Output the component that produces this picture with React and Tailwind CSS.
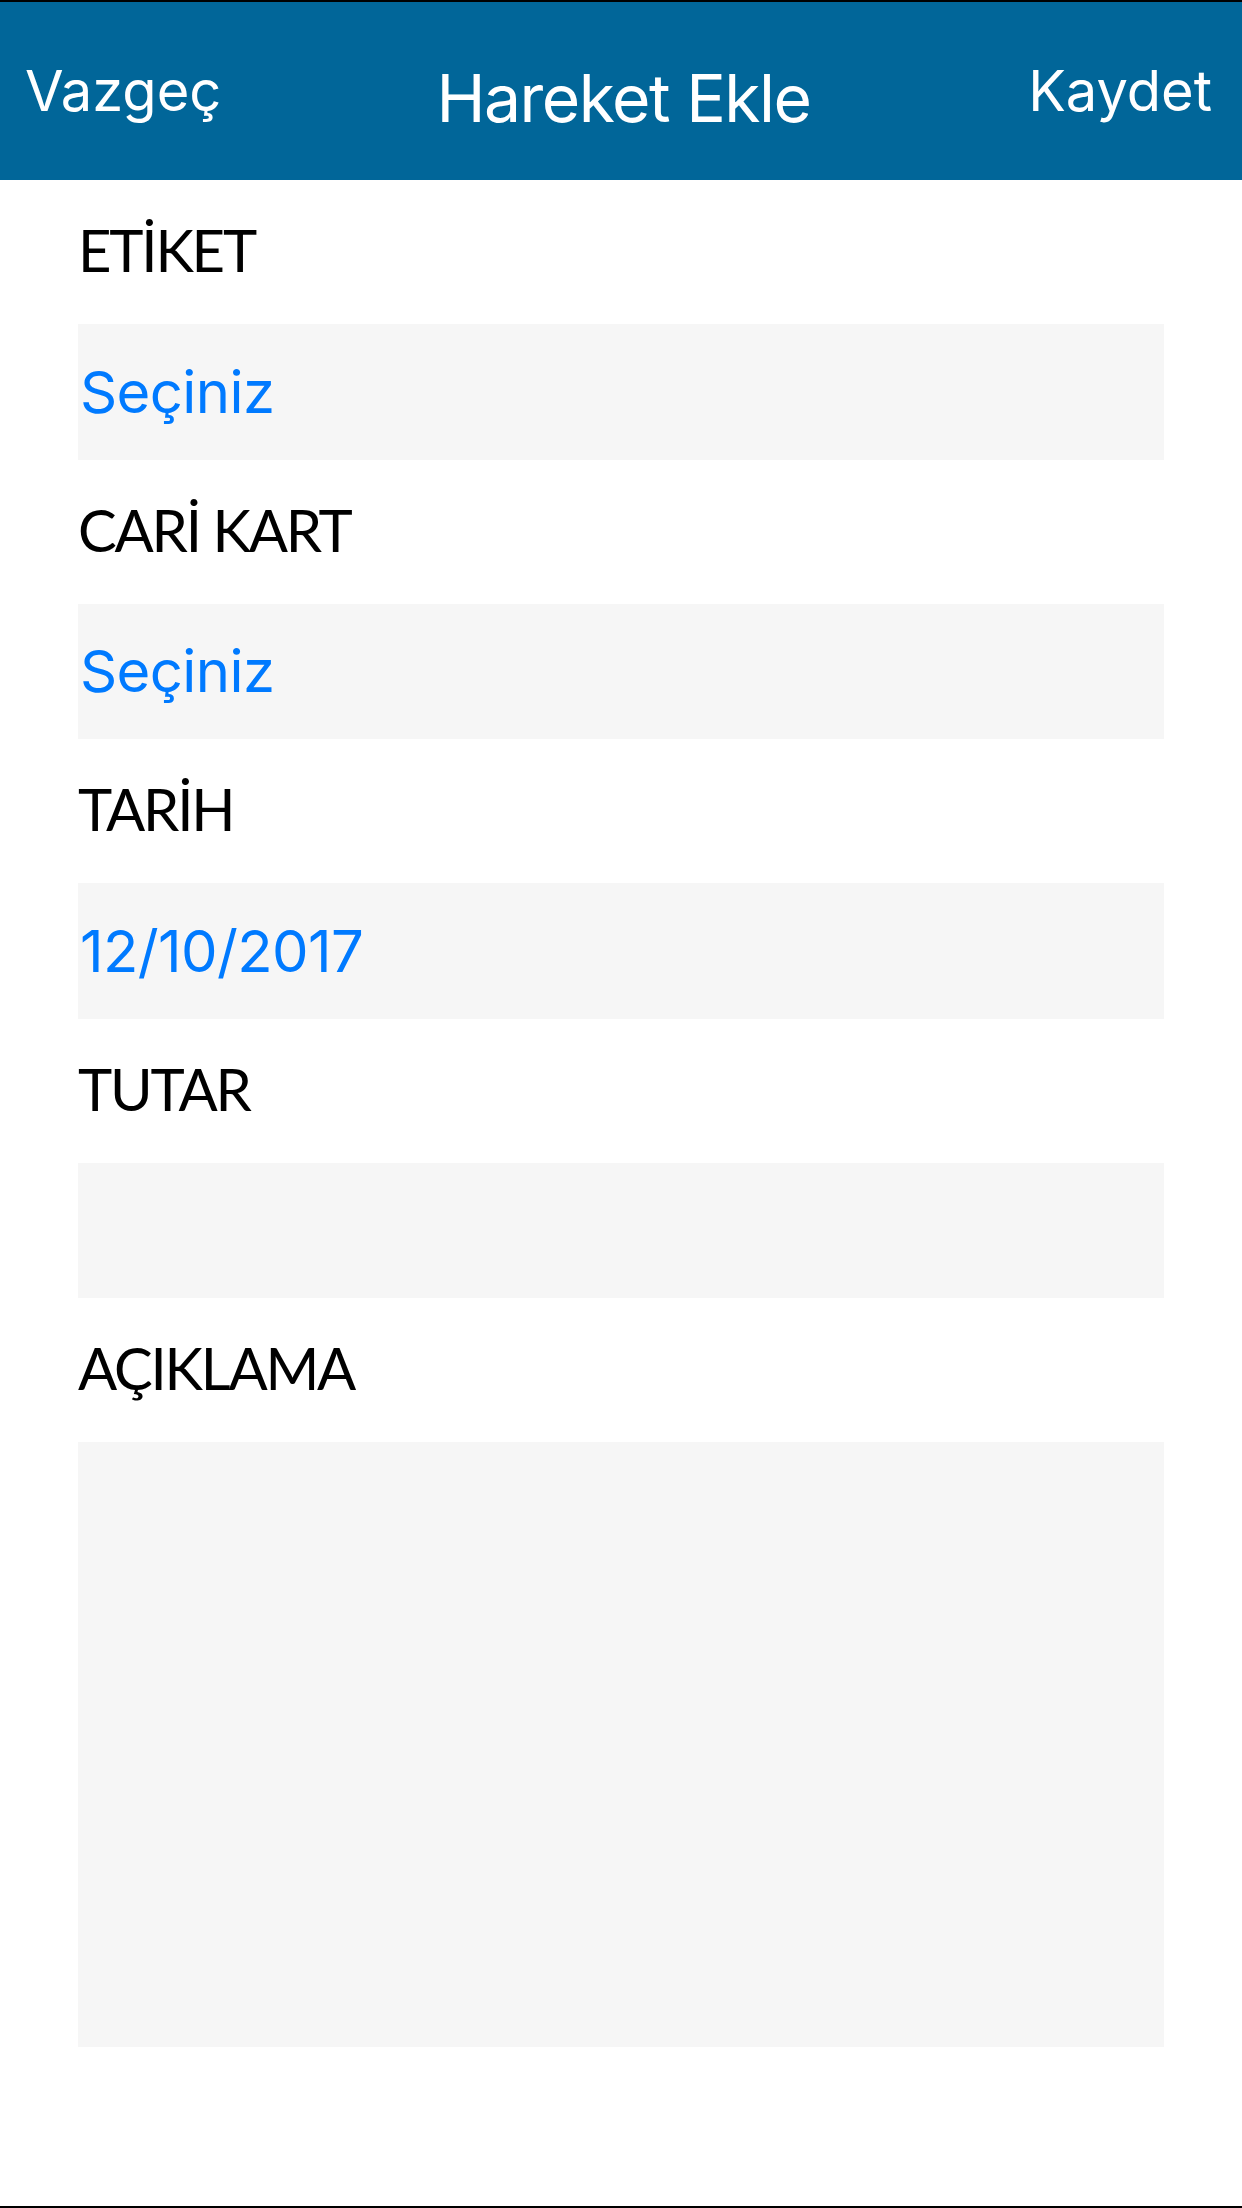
import React from "react";

function Label({ children }) {
  return (
    <div className="h-[144px] pt-[41px] pl-[78px]">
      <div className="text-[58px] leading-none tracking-[-2.2px] text-black font-['Lato',sans-serif]">{children}</div>
    </div>
  );
}

function Field({ children, h = "h-[135.5px]" }) {
  return (
    <div className={`${h} mx-[78px] bg-[#f6f6f6] flex items-center`}>
      {children ? (
        <span className="pl-[2px] text-[58px] leading-none tracking-[-0.6px] text-[#007aff] font-['Inter',sans-serif]">{children}</span>
      ) : null}
    </div>
  );
}

export default function App() {
  return (
    <div className="w-[1242px] h-[2208px] bg-white flex flex-col border-t-2 border-b-2 border-black overflow-hidden">
      <div className="h-[178px] bg-[#016699] flex items-start text-white font-['Inter',sans-serif] shrink-0">
        <div className="flex-1 pl-[25px] pt-[61px] text-[56px] leading-none">Vazgeç</div>
        <div className="ml-[10px] pt-[63px] text-[66px] leading-none tracking-[-1.5px]">Hareket Ekle</div>
        <div className="flex-1 pr-[30px] pt-[61px] text-[56px] leading-none text-right">Kaydet</div>
      </div>
      <Label>ETİKET</Label>
      <Field>Seçiniz</Field>
      <Label>CARİ KART</Label>
      <Field>Seçiniz</Field>
      <Label>TARİH</Label>
      <Field>12/10/2017</Field>
      <Label>TUTAR</Label>
      <Field />
      <Label>AÇIKLAMA</Label>
      <Field h="h-[605px]" />
    </div>
  );
}
